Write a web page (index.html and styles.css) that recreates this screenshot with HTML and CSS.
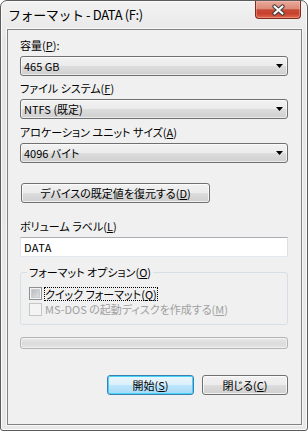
FILE: index.html
```html
<!DOCTYPE html>
<html lang="ja">
<head>
<meta charset="utf-8">
<link rel="stylesheet" href="styles.css">
</head>
<body>
<div class="window">
  <div class="titlebar">
    <span class="title">フォーマット - DATA (F:)</span>
    <div class="close">
      <svg width="15" height="12" viewBox="0 0 15 12">
        <path d="M3.5 2.5 L11.5 9.5 M11.5 2.5 L3.5 9.5" stroke="#3b3b3b" stroke-width="4.2" stroke-linecap="round" fill="none"/>
        <path d="M3.5 2.5 L11.5 9.5 M11.5 2.5 L3.5 9.5" stroke="#ffffff" stroke-width="2.2" stroke-linecap="round" fill="none"/>
      </svg>
    </div>
  </div>
  <div class="client">
    <div class="label first">容量(<u>P</u>):</div>
    <div class="combo"><span>465 GB</span><svg class="arrow" width="7" height="4" viewBox="0 0 7 4"><path d="M0 0 H7 L3.5 4 Z" fill="#000"/></svg></div>

    <div class="label">ファイル システム(<u>F</u>)</div>
    <div class="combo"><span>NTFS (既定)</span><svg class="arrow" width="7" height="4" viewBox="0 0 7 4"><path d="M0 0 H7 L3.5 4 Z" fill="#000"/></svg></div>

    <div class="label l3">アロケーション ユニット サイズ(<u>A</u>)</div>
    <div class="combo"><span>4096 バイト</span><svg class="arrow" width="7" height="4" viewBox="0 0 7 4"><path d="M0 0 H7 L3.5 4 Z" fill="#000"/></svg></div>

    <div class="btn restore">デバイスの既定値を復元する(<u>D</u>)</div>

    <div class="label l4">ボリューム ラベル(<u>L</u>)</div>
    <div class="input">DATA</div>

    <fieldset class="group">
      <legend>フォーマット オプション(<u>O</u>)</legend>
      <div class="check"><span class="box"></span><span class="focus">クイック フォーマット(<u>Q</u>)</span></div>
      <div class="check disabled"><span class="box"></span><span class="text">MS-DOS の起動ディスクを作成する(<u>M</u>)</span></div>
    </fieldset>

    <div class="progress"></div>

    <div class="buttons">
      <div class="btn default">開始(<u>S</u>)</div>
      <div class="btn close-btn">閉じる(<u>C</u>)</div>
    </div>
  </div>
</div>
</body>
</html>
```

FILE: styles.css
```css
html, body {
  margin: 0;
  padding: 0;
  background: #ffffff;
}

body {
  font-family: "Noto Sans CJK JP", "Liberation Sans", sans-serif;
  font-size: 11px;
  font-feature-settings: "palt";
  color: #000;
}

u {
  text-decoration: underline;
  text-underline-offset: 1px;
}

.window {
  width: 308px;
  height: 431px;
  box-sizing: border-box;
  border: 1px solid #5c5c5c;
  border-radius: 7px 7px 3px 3px;
  background: linear-gradient(#f2f2f2, #e6e6e6 40px, #e8e8e8);
  display: flex;
  flex-direction: column;
  box-shadow: inset 0 0 0 1px #fbfbfb;
}

.titlebar {
  height: 28px;
  display: flex;
  justify-content: space-between;
  align-items: flex-start;
  flex: none;
}

.title {
  padding: 5px 0 0 7px;
  font-size: 13px;
  line-height: 17px;
  color: #000;
  font-feature-settings: normal;
  letter-spacing: -0.4px;
}

.close {
  width: 46px;
  height: 18px;
  box-sizing: border-box;
  margin-right: 6px;
  border: 1px solid #7d2b1f;
  border-top: none;
  border-radius: 0 0 4px 4px;
  background: linear-gradient(#eaa99b 0%, #dd8a78 45%, #c44a36 52%, #c9412c 75%, #e0684f 100%);
  box-shadow: inset 0 0 0 1px rgba(255, 210, 200, 0.35);
  display: flex;
  align-items: center;
  justify-content: center;
}

.close svg {
  display: block;
  margin-top: 1px;
}

.client {
  flex: 1;
  margin: 0 5px 5px 6px;
  border: 1px solid #828282;
  background: #f0f0f0;
  padding: 8px 13px 0 12px;
  display: flex;
  flex-direction: column;
  box-shadow: 0 0 0 1px #f8f8f8;
}

.label {
  height: 15px;
  line-height: 15px;
  margin-top: 5px;
  white-space: nowrap;
}

.label.first { margin-top: 0; }
.label.l3 { margin-top: 6px; }
.label.l4 { margin-top: 16px; }

.combo {
  margin-top: 3px;
  height: 20px;
  box-sizing: border-box;
  border: 1px solid #707070;
  border-radius: 3px;
  background: linear-gradient(#f2f2f2 0%, #ebebeb 50%, #dddddd 51%, #cfcfcf 100%);
  box-shadow: inset 0 0 0 1px rgba(255, 255, 255, 0.6);
  display: flex;
  align-items: center;
  justify-content: space-between;
  padding: 0 4px 0 3px;
  line-height: 16px;
}

.btn {
  height: 20px;
  box-sizing: border-box;
  border: 1px solid #707070;
  border-radius: 3px;
  background: linear-gradient(#f2f2f2 0%, #ebebeb 50%, #dddddd 51%, #cfcfcf 100%);
  box-shadow: inset 0 0 0 1px rgba(255, 255, 255, 0.7);
  display: flex;
  align-items: center;
  justify-content: center;
  line-height: 16px;
  white-space: nowrap;
}

.restore {
  width: 189px;
  margin: 20px 0 0 1px;
}

.input {
  margin-top: 3px;
  height: 20px;
  box-sizing: border-box;
  background: #fff;
  border: 1px solid #e3e9ef;
  border-top-color: #abadb3;
  border-left-color: #e2e3ea;
  border-right-color: #dbdfe6;
  padding: 0 3px;
  line-height: 18px;
  letter-spacing: 0.4px;
}

.group {
  margin: 8px 0 0 0;
  border: 1px solid #d5dfe5;
  border-radius: 3px;
  padding: 6px 8px 7px 8px;
  min-width: 0;
}

.group legend {
  padding: 0 2px;
  margin-left: -2px;
  line-height: 15px;
  height: 15px;
}

.check {
  height: 15px;
  display: flex;
  align-items: center;
  line-height: 15px;
  white-space: nowrap;
}

.check + .check {
  margin-top: 1px;
}

.box {
  width: 13px;
  height: 13px;
  box-sizing: border-box;
  border: 1px solid #8e8f8f;
  background: linear-gradient(135deg, #aeb2b8, #e8e8e8);
  box-shadow: inset 0 0 0 1px #f4f4f4, inset 0 0 0 2px #c9ccd1;
  margin-right: 2px;
  flex: none;
}

.focus {
  outline: 1px dotted #000;
  outline-offset: -1px;
  padding: 0 1px;
  height: 14px;
  line-height: 14px;
}

.disabled .box {
  border-color: #c6c6c6;
  background: #f4f4f4;
  box-shadow: none;
}

.disabled .text {
  color: #a0a0a0;
  padding-left: 1px;
}

.progress {
  margin-top: 12px;
  height: 12px;
  box-sizing: border-box;
  border: 1px solid #b4b4b4;
  border-radius: 3px;
  background: linear-gradient(#e9e9e9, #dcdcdc 50%, #e2e2e2);
  box-shadow: inset 0 0 0 1px rgba(255, 255, 255, 0.5);
}

.buttons {
  margin-top: 26px;
  display: flex;
  justify-content: flex-end;
  gap: 8px;
}

.default {
  width: 87px;
  border-color: #3c7fb1;
  background: linear-gradient(#eaf6fd 0%, #d9f0fc 50%, #bee6fd 51%, #a7d9f5 100%);
  box-shadow: inset 0 0 0 1px #48d4f9;
}

.close-btn {
  width: 86px;
}
```
